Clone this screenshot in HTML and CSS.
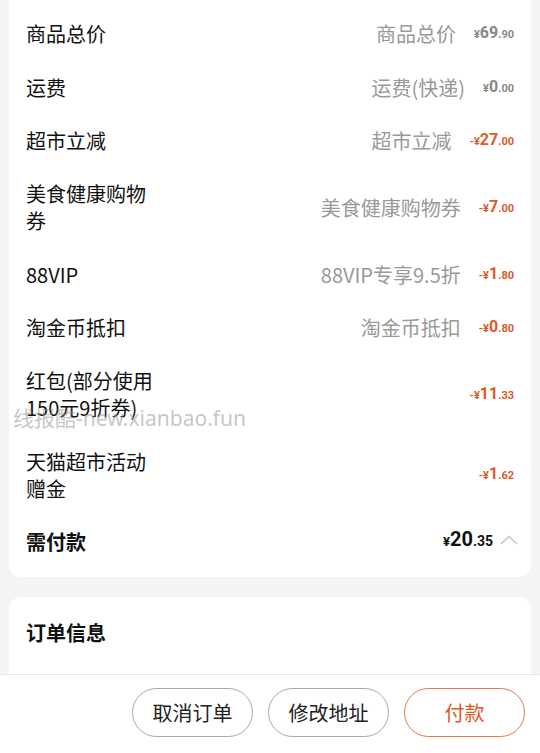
FILE: index.html
```html
<!DOCTYPE html>
<html lang="zh-CN">
<head>
    <meta charset="UTF-8">
    <meta name="viewport" content="width=device-width, initial-scale=1.0">
    <title>订单详情</title>
    <link rel="stylesheet" href="styles.css">
</head>
<body>
    <div class="page">
        <div class="card fee-card">
            <div class="row">
                <div class="label">商品总价</div>
                <div class="note">商品总价</div>
                <div class="price"><i>¥</i><b>69</b><i>.90</i></div>
            </div>
            <div class="row">
                <div class="label">运费</div>
                <div class="note">运费(快递)</div>
                <div class="price"><i>¥</i><b>0</b><i>.00</i></div>
            </div>
            <div class="row">
                <div class="label">超市立减</div>
                <div class="note">超市立减</div>
                <div class="price minus"><i>-¥</i><b>27</b><i>.00</i></div>
            </div>
            <div class="row">
                <div class="label">美食健康购物券</div>
                <div class="note">美食健康购物券</div>
                <div class="price minus"><i>-¥</i><b>7</b><i>.00</i></div>
            </div>
            <div class="row">
                <div class="label">88VIP</div>
                <div class="note">88VIP专享9.5折</div>
                <div class="price minus"><i>-¥</i><b>1</b><i>.80</i></div>
            </div>
            <div class="row">
                <div class="label">淘金币抵扣</div>
                <div class="note">淘金币抵扣</div>
                <div class="price minus"><i>-¥</i><b>0</b><i>.80</i></div>
            </div>
            <div class="row">
                <div class="label">红包(部分使用150元9折券)</div>
                <div class="price minus"><i>-¥</i><b>11</b><i>.33</i></div>
            </div>
            <div class="row">
                <div class="label">天猫超市活动赠金</div>
                <div class="price minus"><i>-¥</i><b>1</b><i>.62</i></div>
            </div>
            <div class="row total-row">
                <div class="label">需付款</div>
                <div class="price total"><i>¥</i><b>20</b><i>.35</i></div>
                <svg class="chevron" width="18" height="10" viewBox="0 0 18 10">
                    <path d="M1 9 L9 1.5 L17 9" fill="none" stroke="#c4c4c4" stroke-width="1.4"/>
                </svg>
            </div>
        </div>

        <div class="card info-card">
            <h2>订单信息</h2>
        </div>
    </div>

    <div class="watermark">线报酷-new.xianbao.fun</div>

    <div class="action-bar">
        <button class="btn">取消订单</button>
        <button class="btn">修改地址</button>
        <button class="btn pay">付款</button>
    </div>
</body>
</html>
```

FILE: styles.css
```css
* {
    margin: 0;
    padding: 0;
    box-sizing: border-box;
}

body {
    background: #f4f4f4;
    font-family: 'Noto Sans CJK SC', 'Noto Sans', sans-serif;
    color: #111;
    overflow: hidden;
    height: 753px;
}

.page {
    padding: 0 9px;
}

.card {
    background: white;
    border-radius: 12px;
}

.fee-card {
    margin-top: -12px;
    padding: 19px 17px 9px 17px;
}

.row {
    display: flex;
    align-items: center;
    padding: 13.2px 0;
    min-height: 53px;
}

.label {
    width: 132px;
    font-size: 20px;
    line-height: 27px;
}

.note {
    margin-left: auto;
    margin-right: 18px;
    font-size: 20px;
    line-height: 27px;
    color: #999;
    white-space: nowrap;
}

.price {
    margin-left: auto;
    font-family: Roboto, 'Liberation Sans', sans-serif;
    font-size: 14px;
    line-height: 27px;
    color: #888;
    white-space: nowrap;
}

.note + .price {
    margin-left: 0;
}

.price i,
.price b {
    line-height: 1;
}

.price i {
    font-style: normal;
    font-weight: bold;
    font-size: 11px;
}

.price b {
    font-size: 16px;
}

.price.minus {
    color: #dc5a28;
}

.total-row .label {
    font-weight: bold;
}

.price.total {
    color: #111;
}

.price.total i {
    font-size: 14px;
}

.price.total i:first-child {
    font-size: 13px;
}

.price.total b {
    font-size: 20px;
}

.chevron {
    margin-left: 7px;
    margin-right: -4px;
    margin-top: -4px;
}

.info-card {
    margin-top: 20px;
    min-height: 200px;
    padding: 22px 17px;
}

.info-card h2 {
    font-size: 20px;
    line-height: 27px;
    font-weight: bold;
}

/* 水印 */
.watermark {
    position: absolute;
    left: 13px;
    top: 405px;
    font-family: 'Noto Sans', 'Noto Sans CJK SC', sans-serif;
    font-size: 21px;
    line-height: 27px;
    color: rgba(150, 150, 150, 0.55);
    pointer-events: none;
}

.action-bar {
    position: fixed;
    left: 0;
    right: 0;
    bottom: 0;
    height: 79px;
    background: white;
    border-top: 1px solid #e6e6e6;
    display: flex;
    justify-content: flex-end;
    gap: 15px;
    padding: 13px 15px 0 0;
}

.btn {
    width: 121px;
    height: 49px;
    border: 1px solid #a8a8a8;
    border-radius: 25px;
    background: white;
    font-family: 'Noto Sans CJK SC', sans-serif;
    font-size: 20px;
    color: #222;
}

.btn.pay {
    border-color: #dc7a4c;
    color: #e0581e;
}
```
